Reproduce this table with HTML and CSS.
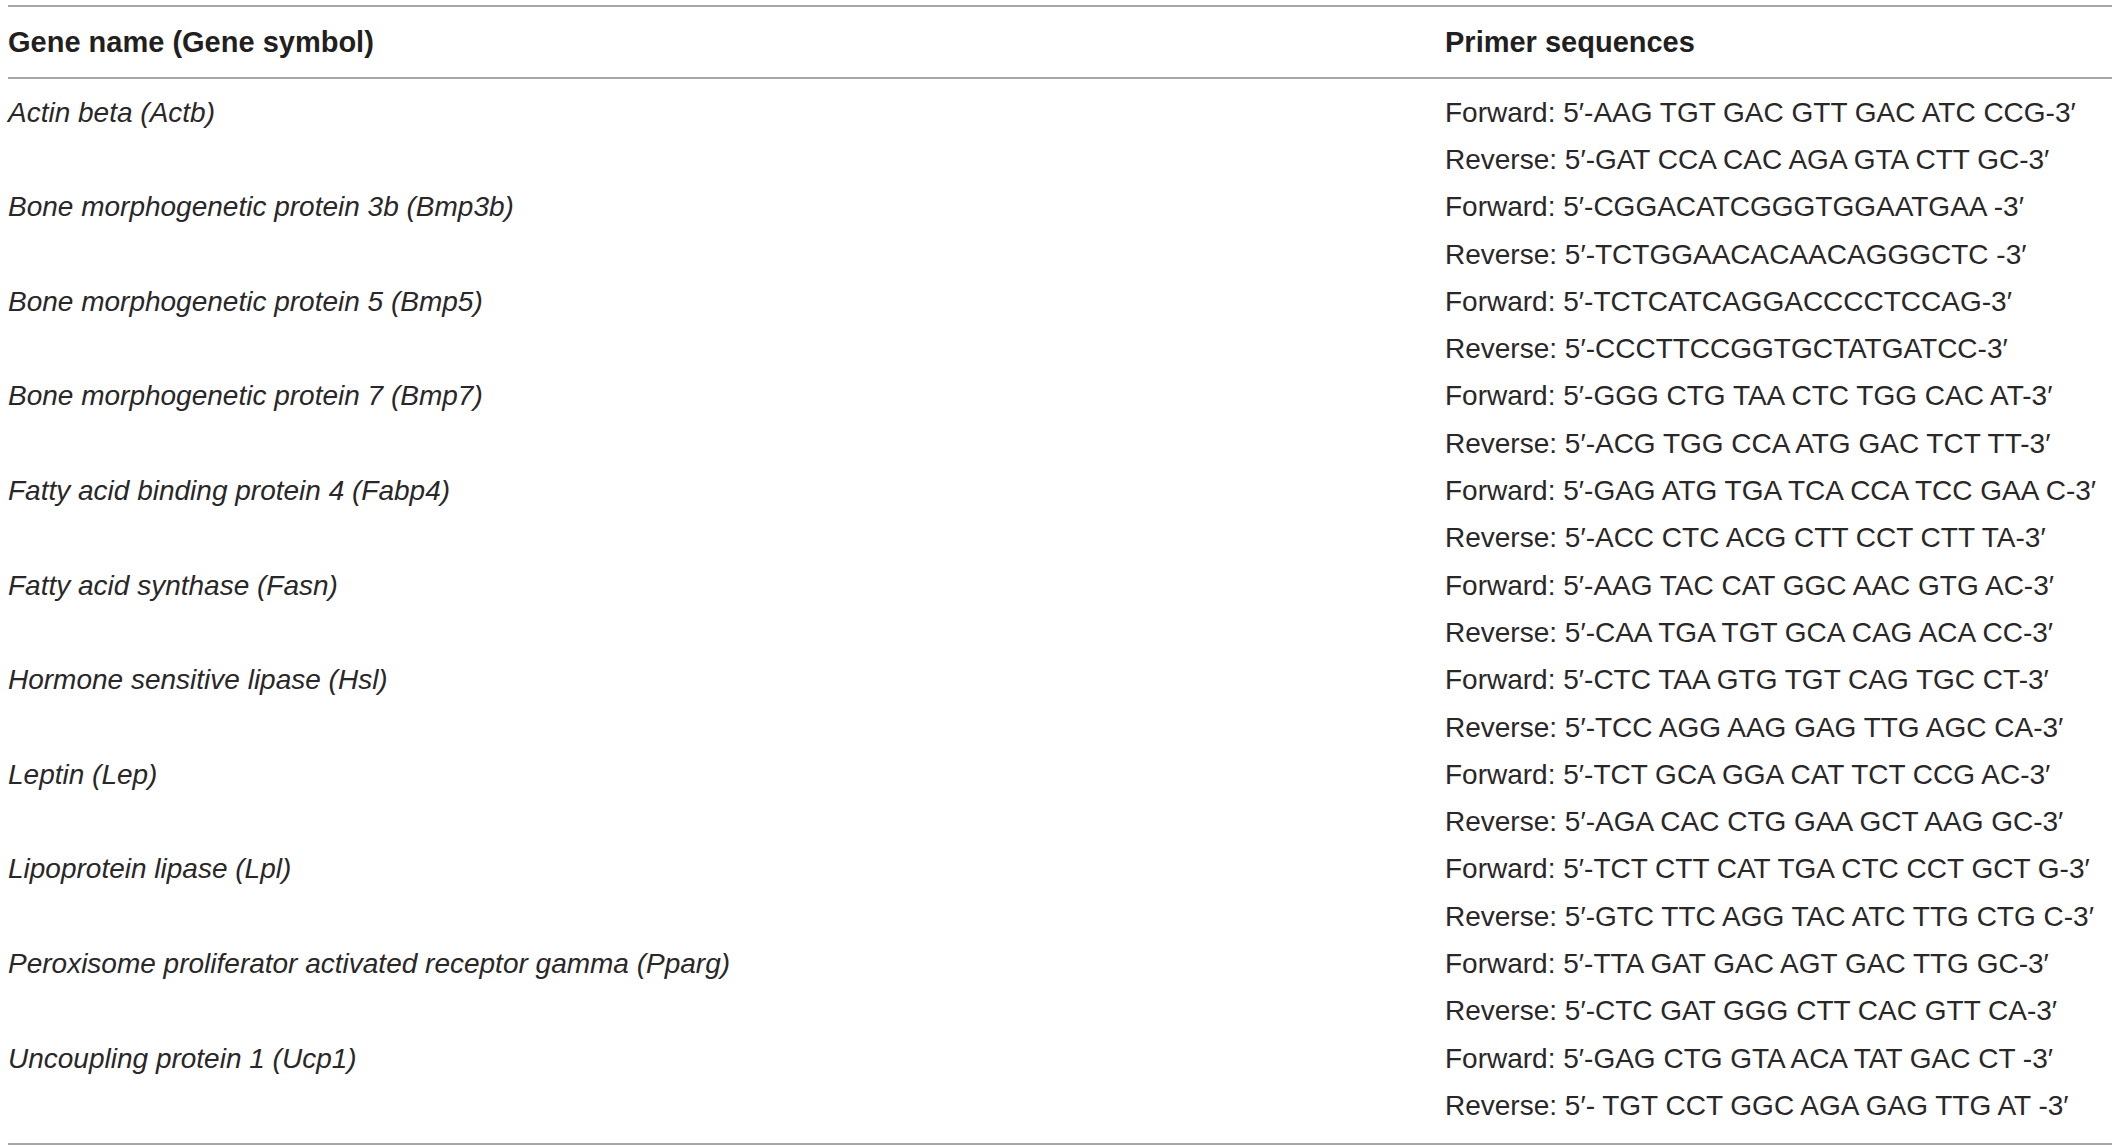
FILE: index.html
```html
<!DOCTYPE html>
<html>
<head>
<meta charset="utf-8">
<link rel="stylesheet" href="styles.css">
</head>
<body>
<div class="tbl">
  <div class="head">
    <div class="c1">Gene name (Gene symbol)</div>
    <div class="c2">Primer sequences</div>
  </div>
  <div class="body">
    <div class="c1 gene">Actin beta (Actb)</div><div class="c2">Forward: 5′-AAG TGT GAC GTT GAC ATC CCG-3′</div>
    <div class="c1"></div><div class="c2">Reverse: 5′-GAT CCA CAC AGA GTA CTT GC-3′</div>
    <div class="c1 gene">Bone morphogenetic protein 3b (Bmp3b)</div><div class="c2">Forward: 5′-CGGACATCGGGTGGAATGAA -3′</div>
    <div class="c1"></div><div class="c2">Reverse: 5′-TCTGGAACACAACAGGGCTC -3′</div>
    <div class="c1 gene">Bone morphogenetic protein 5 (Bmp5)</div><div class="c2">Forward: 5′-TCTCATCAGGACCCCTCCAG-3′</div>
    <div class="c1"></div><div class="c2">Reverse: 5′-CCCTTCCGGTGCTATGATCC-3′</div>
    <div class="c1 gene">Bone morphogenetic protein 7 (Bmp7)</div><div class="c2">Forward: 5′-GGG CTG TAA CTC TGG CAC AT-3′</div>
    <div class="c1"></div><div class="c2">Reverse: 5′-ACG TGG CCA ATG GAC TCT TT-3′</div>
    <div class="c1 gene">Fatty acid binding protein 4 (Fabp4)</div><div class="c2">Forward: 5′-GAG ATG TGA TCA CCA TCC GAA C-3′</div>
    <div class="c1"></div><div class="c2">Reverse: 5′-ACC CTC ACG CTT CCT CTT TA-3′</div>
    <div class="c1 gene">Fatty acid synthase (Fasn)</div><div class="c2">Forward: 5′-AAG TAC CAT GGC AAC GTG AC-3′</div>
    <div class="c1"></div><div class="c2">Reverse: 5′-CAA TGA TGT GCA CAG ACA CC-3′</div>
    <div class="c1 gene">Hormone sensitive lipase (Hsl)</div><div class="c2">Forward: 5′-CTC TAA GTG TGT CAG TGC CT-3′</div>
    <div class="c1"></div><div class="c2">Reverse: 5′-TCC AGG AAG GAG TTG AGC CA-3′</div>
    <div class="c1 gene">Leptin (Lep)</div><div class="c2">Forward: 5′-TCT GCA GGA CAT TCT CCG AC-3′</div>
    <div class="c1"></div><div class="c2">Reverse: 5′-AGA CAC CTG GAA GCT AAG GC-3′</div>
    <div class="c1 gene">Lipoprotein lipase (Lpl)</div><div class="c2">Forward: 5′-TCT CTT CAT TGA CTC CCT GCT G-3′</div>
    <div class="c1"></div><div class="c2">Reverse: 5′-GTC TTC AGG TAC ATC TTG CTG C-3′</div>
    <div class="c1 gene">Peroxisome proliferator activated receptor gamma (Pparg)</div><div class="c2">Forward: 5′-TTA GAT GAC AGT GAC TTG GC-3′</div>
    <div class="c1"></div><div class="c2">Reverse: 5′-CTC GAT GGG CTT CAC GTT CA-3′</div>
    <div class="c1 gene">Uncoupling protein 1 (Ucp1)</div><div class="c2">Forward: 5′-GAG CTG GTA ACA TAT GAC CT -3′</div>
    <div class="c1"></div><div class="c2">Reverse: 5′- TGT CCT GGC AGA GAG TTG AT -3′</div>
  </div>
</div>
</body>
</html>
```
FILE: styles.css
```css
html, body {
  margin: 0;
  padding: 0;
  background: #ffffff;
}
body {
  padding: 5px 8px 0 8px;
  font-family: "Liberation Sans", Arial, sans-serif;
  color: #2a2728;
  font-size: 28px;
}
.tbl {
  width: 2104px;
}
.head {
  display: grid;
  grid-template-columns: 1437px 1fr;
  height: 70px;
  align-items: center;
  border-top: 2px solid #a6a6a6;
  border-bottom: 2px solid #a6a6a6;
  font-weight: bold;
  font-size: 29px;
  color: #231f20;
}
.body {
  display: grid;
  grid-template-columns: 1437px 1fr;
  grid-auto-rows: 47.3px;
  align-items: center;
  padding: 10px 0 13px 0;
  border-bottom: 2px solid #a6a6a6;
}
.gene {
  font-style: italic;
}
.c1, .c2 {
  white-space: nowrap;
}
```
